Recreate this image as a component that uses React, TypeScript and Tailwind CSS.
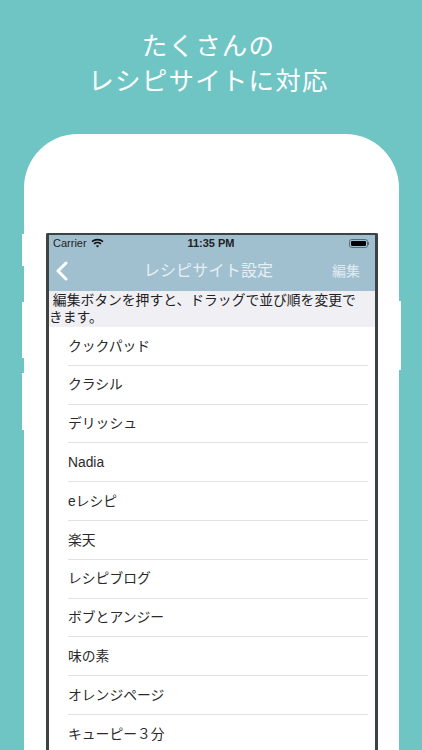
const sites = [
  "クックパッド",
  "クラシル",
  "デリッシュ",
  "Nadia",
  "eレシピ",
  "楽天",
  "レシピブログ",
  "ボブとアンジー",
  "味の素",
  "オレンジページ",
  "キューピー３分",
];

export default function App() {
  return (
    <div className="h-[750px] w-[422px] overflow-hidden bg-[#6fc5c4] font-['Liberation_Sans','Noto_Sans_CJK_JP',sans-serif]">
      {/* Headline */}
      <div className="flex h-[134px] flex-col items-center pr-[5px] pt-[29px] text-[25.5px] leading-[35px] tracking-[1.2px] text-white">
        <p>たくさんの</p>
        <p>レシピサイトに対応</p>
      </div>

      {/* Phone */}
      <div className="relative mx-[24px] h-[616px] w-[375px] rounded-t-[54px] bg-white px-[22px] pt-[99px]">
        <div className="absolute left-[-2px] top-[100px] h-[32px] w-[2px] bg-white" />
        <div className="absolute left-[-2px] top-[168px] h-[56px] w-[2px] bg-white" />
        <div className="absolute left-[-2px] top-[239px] h-[57px] w-[2px] bg-white" />
        <div className="absolute right-[-2px] top-[167px] h-[69px] w-[2px] bg-white" />

        {/* Screen */}
        <div className="h-[517px] w-[332px] overflow-hidden rounded-t-[2px] border-x-[3px] border-t-[2px] border-[#3d4245] bg-white">
          <div className="h-[56px] bg-[#a0c0d0]">
            <div className="flex h-[15px] items-center justify-between pl-[4px] pr-[6px] pt-[1px] text-[11px] text-[#222]">
              <div className="flex w-[60px] items-center gap-[4px]">
                <span>Carrier</span>
                <svg width="13" height="10" viewBox="0 0 13 10" fill="none" stroke="#111" strokeWidth="1.6" className="shrink-0">
                  <path d="M1 3.6C4 .9 9 .9 12 3.6" />
                  <path d="M3 5.8C4.9 4.2 8.1 4.2 10 5.8" />
                  <path d="M6.5 9.6 4.8 7.7C5.8 7 7.2 7 8.2 7.7Z" fill="#111" stroke="none" />
                </svg>
              </div>
              <span className="font-bold">11:35 PM</span>
              <div className="flex w-[60px] items-center justify-end">
                <div className="flex h-[9px] w-[19px] items-center rounded-[2.5px] border border-[#5b6b75] p-[1px]">
                  <div className="h-full w-full rounded-[1px] bg-black" />
                </div>
                <div className="ml-[0.5px] h-[3px] w-[1px] bg-[#5b6b75]" />
              </div>
            </div>
            <div className="flex h-[41px] items-center justify-between pl-[7px] pr-[15px] pt-[1px]">
              <svg width="12" height="20" viewBox="0 0 12 20" fill="none" stroke="white" strokeWidth="3" strokeLinecap="round" strokeLinejoin="round">
                <path d="M10 2 2 10l8 8" />
              </svg>
              <span className="ml-[17px] text-[16px] tracking-[0.2px] text-[#e6eff3]">レシピサイト設定</span>
              <span className="text-[14px] text-[#e0ebf0]">編集</span>
            </div>
          </div>

          {/* Hint */}
          <div className="h-[36px] bg-[#efeff4] pt-[1px] text-[13.8px] leading-[17px] text-[#222]">
            <p>&nbsp;編集ボタンを押すと、ドラッグで並び順を変更で</p>
            <p>きます。</p>
          </div>

          {/* Site list */}
          <ul className="pl-[19px] pr-[7px]">
            {sites.map((site) => (
              <li
                key={site}
                className="flex h-[38.8px] items-center border-b border-[#e2e2e4] pt-[2px] text-[13.8px] text-[#2a2a2a]"
              >
                {site}
              </li>
            ))}
          </ul>
        </div>
      </div>
    </div>
  );
}
